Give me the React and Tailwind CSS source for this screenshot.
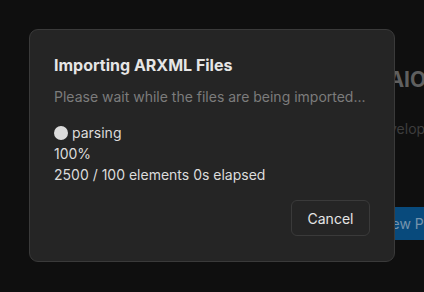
import { useState } from 'react'

export default function App() {
  const [status] = useState({ stage: 'parsing', percent: 100, done: 2500, total: 100, elapsed: 0 })

  return (
    <div className="relative w-[424px] h-[292px] overflow-hidden bg-[#0f0f0f] font-['Inter',sans-serif]">
      {/* page behind the overlay */}
      <div className="flex flex-col pl-[307px] pt-[66px] whitespace-nowrap">
        <h1 className="text-[21px] font-bold text-[#5f5f5f] leading-[28px]">ARXML AIO</h1>
        <p className="mt-[24px] ml-[64px] text-[14px] text-[#3d3d3d]">Development tools</p>
        <div className="mt-[68px] ml-[58px] flex">
          <button className="h-[33px] px-4 bg-[#084a7c] text-[14px] text-[#7694ad]">New Project</button>
        </div>
      </div>

      {/* dialog */}
      <div className="absolute left-[29px] top-[29px] w-[366px] h-[233px] rounded-[9px] border border-[#3a3a3a] bg-[#252525] px-6 pt-[23px] flex flex-col">
        <h2 className="text-[16px] font-bold text-[#e6e6e6] leading-[24px]">Importing ARXML Files</h2>
        <p className="mt-[10px] text-[14px] text-[#7c7c7c] leading-[20px] whitespace-nowrap">Please wait while the files are being imported...</p>
        <div className="mt-[15px] flex flex-col text-[14px] text-[#dcdcdc] leading-[21px]">
          <div className="flex items-center gap-[4px]">
            <span className="w-[14px] h-[14px] rounded-full bg-[#dcdcdc]" />
            <span>{status.stage}</span>
          </div>
          <div>{status.percent}%</div>
          <div>{status.done} / {status.total} elements {status.elapsed}s elapsed</div>
        </div>
        <div className="mt-[15px] flex justify-end">
          <button className="w-[79px] h-[36px] rounded-md border border-[#3a3a3a] bg-[#252525] text-[14px] text-[#e6e6e6]">Cancel</button>
        </div>
      </div>
    </div>
  )
}
